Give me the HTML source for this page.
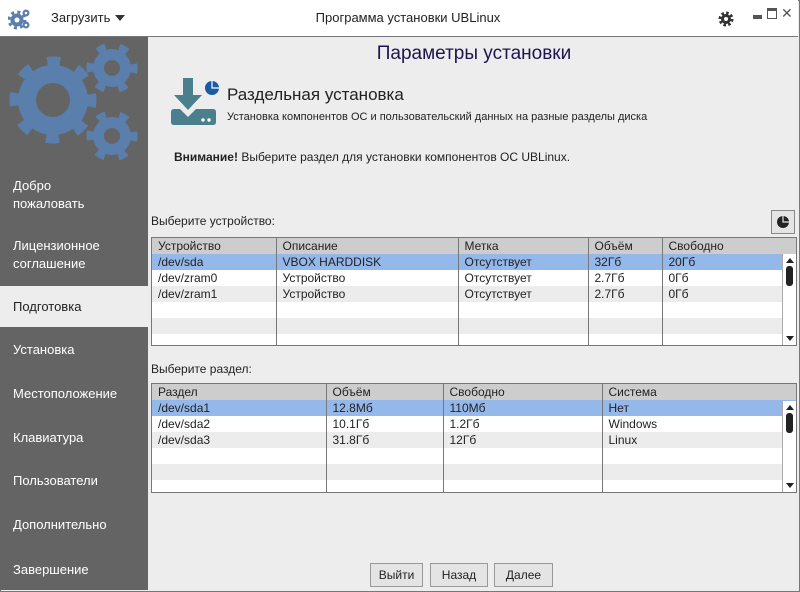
<!DOCTYPE html>
<html><head><meta charset="utf-8"><style>
*{box-sizing:border-box;margin:0;padding:0}
body{width:800px;height:592px;overflow:hidden;font-family:"Liberation Sans","DejaVu Sans",sans-serif;font-size:12px;color:#222;background:#ededed;position:relative}
.win{position:absolute;left:0;top:0;width:800px;height:592px;border:1px solid #777}
.hdr{position:absolute;left:0;top:0;width:798px;height:37px;background:#fff;border-bottom:1px solid #777}
.side{position:absolute;left:0;top:37px;width:148px;height:553px;background:#646464}
.item{position:absolute;left:0;width:148px;color:#fff;font-size:13px;padding-left:13px;line-height:18px}
.sel{background:#ededed;color:#222}
.abs{position:absolute}
table{border-collapse:collapse;width:100%;font-size:12px}
td{height:16px;padding:0 6px;border-left:1px solid #777;white-space:nowrap;line-height:16px}
td:first-child{border-left:none}
tr.h td{background:#cdcdcd}
tr.s td{background:#95b8ea}
tr.g td{background:#ececec}
tr.w td{background:#fff}
.tbl{position:absolute;border:1px solid #777;background:#fff;overflow:hidden}
.sb{position:absolute;right:0;width:14px;background:#fff;border-left:1px solid #aaa}
.btn{position:absolute;top:563px;height:24px;border:1px solid #999;background:#e4e4e4;font-size:12px;text-align:center;line-height:22px}
</style></head><body>
<div class="win"></div>
<div class="hdr">
<svg class="abs" style="left:8px;top:8px" width="24" height="22" viewBox="0 0 24 22"><g fill="#5b7fad"><circle cx="9" cy="12" r="6.5"/><circle cx="9" cy="12" r="8" fill="none" stroke="#5b7fad" stroke-width="3" stroke-dasharray="3 3.3"/><circle cx="18" cy="5" r="3.5"/><circle cx="18" cy="17" r="3.5"/></g><circle cx="9" cy="12" r="2.5" fill="#fff"/><circle cx="18" cy="5" r="1.3" fill="#fff"/><circle cx="18" cy="17" r="1.3" fill="#fff"/></svg>
<div class="abs" style="left:51px;top:10px;font-size:13px">Загрузить</div>
<div class="abs" style="left:115px;top:15px;width:0;height:0;border-left:5px solid transparent;border-right:5px solid transparent;border-top:6px solid #333"></div>
<div class="abs" style="left:0;width:800px;top:10px;text-align:center;font-size:13px;padding-left:16px">Программа установки UBLinux</div>
<svg class="abs" style="left:718px;top:11px" width="16" height="16" viewBox="0 0 16 16"><circle cx="8" cy="8" r="5" fill="#333"/><circle cx="8" cy="8" r="6" fill="none" stroke="#333" stroke-width="3" stroke-dasharray="2.5 2.2"/><circle cx="8" cy="8" r="2" fill="#fff"/></svg>
<div class="abs" style="left:753px;top:15px;width:9px;height:4px;background:#555"></div>
<div class="abs" style="left:767px;top:8px;width:10px;height:11px;border:1px solid #555;border-top:3px solid #555"></div>
<div class="abs" style="left:781px;top:5px;font-size:14px;color:#555">✕</div>
</div>
<div class="side">
<svg class="abs" style="left:0;top:0" width="148" height="140" viewBox="0 37 148 140"><g fill="#5b7fad">
<circle cx="53" cy="100" r="35"/><circle cx="53" cy="100" r="39" fill="none" stroke="#5b7fad" stroke-width="9" stroke-dasharray="13 17.6" stroke-dashoffset="6"/>
<circle cx="112" cy="68" r="19"/><circle cx="112" cy="68" r="22" fill="none" stroke="#5b7fad" stroke-width="7" stroke-dasharray="9 14" stroke-dashoffset="4"/>
<circle cx="112" cy="136" r="19"/><circle cx="112" cy="136" r="22" fill="none" stroke="#5b7fad" stroke-width="7" stroke-dasharray="9 14" stroke-dashoffset="4"/>
</g><circle cx="53" cy="100" r="17" fill="#646464"/><circle cx="112" cy="68" r="8" fill="#646464"/><circle cx="112" cy="136" r="8" fill="#646464"/></svg>
<div class="item" style="top:140px">Добро<br>пожаловать</div>
<div class="item" style="top:200px">Лицензионное<br>соглашение</div>
<div class="item sel" style="top:249px;height:41px;line-height:41px">Подготовка</div>
<div class="item" style="top:304px">Установка</div>
<div class="item" style="top:348px">Местоположение</div>
<div class="item" style="top:392px">Клавиатура</div>
<div class="item" style="top:435px">Пользователи</div>
<div class="item" style="top:479px">Дополнительно</div>
<div class="item" style="top:524px">Завершение</div>
</div>
<div class="abs" style="left:148px;width:652px;top:43px;text-align:center;font-size:19px;color:#1e1450">Параметры установки</div>
<svg class="abs" style="left:170px;top:78px" width="52" height="48" viewBox="0 0 52 48"><g fill="#4a7f8e"><rect x="13" y="0" width="10" height="18"/><path d="M4 17h28l-14 15z"/><path d="M1 34Q1 31 4 31h6l8 8 8-8h17q3 0 3 3v10q0 3-3 3H4q-3 0-3-3z"/></g><circle cx="33" cy="42" r="1.7" fill="#fff"/><circle cx="39" cy="42" r="1.7" fill="#fff"/><circle cx="42" cy="10" r="7" fill="#1b5aa5"/><path d="M42 3v7h7" fill="none" stroke="#fff" stroke-width="1.2"/></svg>
<div class="abs" style="left:227px;top:85px;font-size:17px">Раздельная установка</div>
<div class="abs" style="left:227px;top:111px;font-size:11px">Установка компонентов ОС и пользовательский данных на разные разделы диска</div>
<div class="abs" style="left:174px;top:150px;font-size:12px"><b>Внимание!</b> Выберите раздел для установки компонентов ОС UBLinux.</div>
<div class="abs" style="left:151px;top:214px">Выберите устройство:</div>
<div class="abs" style="left:771px;top:210px;width:24px;height:24px;border:1px solid #888;background:#e4e4e4"><svg width="22" height="22" viewBox="0 0 22 22"><circle cx="11" cy="11" r="6" fill="#222"/><path d="M11 5v6h6" fill="none" stroke="#e4e4e4" stroke-width="1.2"/></svg></div>
<div class="tbl" style="left:151px;top:237px;width:646px;height:109px">
<table><colgroup><col style="width:124px"><col style="width:182px"><col style="width:130px"><col style="width:74px"><col></colgroup>
<tr class="h"><td>Устройство</td><td>Описание</td><td>Метка</td><td>Объём</td><td>Свободно</td></tr>
<tr class="s"><td>/dev/sda</td><td>VBOX HARDDISK</td><td>Отсутствует</td><td>32Гб</td><td>20Гб</td></tr>
<tr class="w"><td>/dev/zram0</td><td>Устройство</td><td>Отсутствует</td><td>2.7Гб</td><td>0Гб</td></tr>
<tr class="g"><td>/dev/zram1</td><td>Устройство</td><td>Отсутствует</td><td>2.7Гб</td><td>0Гб</td></tr>
<tr class="w"><td></td><td></td><td></td><td></td><td></td></tr>
<tr class="g"><td></td><td></td><td></td><td></td><td></td></tr>
<tr class="w"><td></td><td></td><td></td><td></td><td></td></tr>
</table>
<div class="sb" style="top:16px;height:92px"><div class="abs" style="left:3px;top:4px;border-left:4px solid transparent;border-right:4px solid transparent;border-bottom:5px solid #222"></div><div class="abs" style="left:3px;top:12px;width:7px;height:20px;border-radius:3px;background:#222"></div><div class="abs" style="left:3px;top:82px;border-left:4px solid transparent;border-right:4px solid transparent;border-top:5px solid #222"></div></div>
</div>
<div class="abs" style="left:151px;top:362px">Выберите раздел:</div>
<div class="tbl" style="left:151px;top:383px;width:646px;height:110px">
<table><colgroup><col style="width:174px"><col style="width:117px"><col style="width:159px"><col></colgroup>
<tr class="h"><td>Раздел</td><td>Объём</td><td>Свободно</td><td>Система</td></tr>
<tr class="s"><td>/dev/sda1</td><td>12.8Мб</td><td>110Мб</td><td>Нет</td></tr>
<tr class="w"><td>/dev/sda2</td><td>10.1Гб</td><td>1.2Гб</td><td>Windows</td></tr>
<tr class="g"><td>/dev/sda3</td><td>31.8Гб</td><td>12Гб</td><td>Linux</td></tr>
<tr class="w"><td></td><td></td><td></td><td></td></tr>
<tr class="g"><td></td><td></td><td></td><td></td></tr>
<tr class="w"><td></td><td></td><td></td><td></td></tr>
</table>
<div class="sb" style="top:17px;height:92px"><div class="abs" style="left:3px;top:4px;border-left:4px solid transparent;border-right:4px solid transparent;border-bottom:5px solid #222"></div><div class="abs" style="left:3px;top:12px;width:7px;height:20px;border-radius:3px;background:#222"></div><div class="abs" style="left:3px;top:82px;border-left:4px solid transparent;border-right:4px solid transparent;border-top:5px solid #222"></div></div>
</div>
<div class="btn" style="left:370px;width:53px">Выйти</div>
<div class="btn" style="left:430px;width:58px">Назад</div>
<div class="btn" style="left:494px;width:59px">Далее</div>
</body></html>
